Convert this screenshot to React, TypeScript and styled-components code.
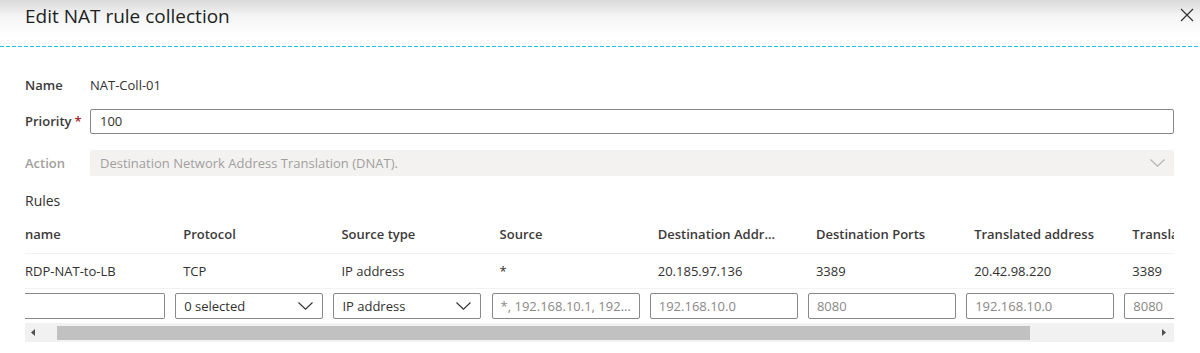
import styled, { createGlobalStyle } from "styled-components";

const GlobalStyle = createGlobalStyle`
  html, body {
    margin: 0;
    padding: 0;
    background: #ffffff;
  }
  body {
    font-family: "Open Sans", "Noto Sans", sans-serif;
    color: #323130;
  }
  * {
    box-sizing: border-box;
  }
`;

const Panel = styled.div`
  width: 1200px;
  height: 353px;
  overflow: hidden;
  background: #ffffff;
`;

const Header = styled.div`
  height: 47px;
  display: flex;
  align-items: flex-start;
  justify-content: space-between;
  padding: 3px 6px 0 25px;
  background: linear-gradient(#d9d9d9 0px, #f4f4f4 16px, #ffffff 38px);
  position: relative;

  &::after {
    content: "";
    position: absolute;
    left: 0;
    right: 2px;
    bottom: 0;
    height: 1px;
    background: repeating-linear-gradient(
      90deg,
      #1fc3ee 0px,
      #1fc3ee 4px,
      transparent 4px,
      transparent 6px
    );
  }
`;

const Title = styled.h1`
  margin: 0;
  font-size: 19px;
  font-weight: 400;
  line-height: 26px;
  color: #201f1e;
`;

const CloseButton = styled.button`
  border: none;
  background: none;
  padding: 0;
  margin-top: 5px;
  width: 14px;
  height: 14px;
  cursor: pointer;
  display: flex;
`;

const Body = styled.div`
  padding: 25px 26px 0 25px;
`;

const FieldRow = styled.div<{ $top?: number }>`
  display: flex;
  align-items: center;
  height: 26px;
  margin-top: ${(p) => p.$top ?? 0}px;
`;

const Label = styled.label<{ $disabled?: boolean }>`
  width: 65px;
  flex-shrink: 0;
  font-size: 13px;
  font-weight: 600;
  color: ${(p) => (p.$disabled ? "#a19f9d" : "#3b3a39")};
`;

const Required = styled.span`
  color: #a4262c;
  margin-left: 3px;
`;

const Value = styled.span`
  font-size: 13px;
`;

const TextBox = styled.div`
  flex: 1;
  height: 25px;
  border: 1px solid #8a8886;
  border-radius: 2px;
  display: flex;
  align-items: center;
  padding: 0 9px;
  font-size: 13px;
  color: #323130;
`;

const DisabledSelect = styled.div`
  flex: 1;
  height: 26px;
  background: #f3f2f1;
  border-radius: 2px;
  display: flex;
  align-items: center;
  justify-content: space-between;
  padding: 0 9px 0 10px;
  font-size: 13px;
  color: #a19f9d;
`;

const SectionTitle = styled.div`
  margin-top: 15px;
  height: 20px;
  line-height: 20px;
  font-size: 14px;
  color: #323130;
`;

const TableClip = styled.div`
  margin-top: 13px;
  overflow: hidden;
`;

const Table = styled.div`
  margin-left: -8px;
  width: 1330px;
`;

const Row = styled.div<{ $kind: "head" | "data" | "edit" }>`
  display: grid;
  grid-template-columns: repeat(8, 158.2px);
  align-items: ${(p) => (p.$kind === "head" ? "start" : "center")};
  height: ${(p) => (p.$kind === "head" ? 30 : p.$kind === "data" ? 35 : 34)}px;
  padding-top: ${(p) => (p.$kind === "edit" ? 4 : 0)}px;
  border-bottom: ${(p) => (p.$kind === "edit" ? "none" : "1px solid #f3f2f1")};
  align-content: ${(p) => (p.$kind === "edit" ? "start" : "normal")};
`;

const HeadCell = styled.div`
  padding-left: 8px;
  font-size: 13px;
  font-weight: 600;
  line-height: 20px;
  white-space: nowrap;
  color: #3b3a39;
`;

const DataCell = styled.div`
  padding-left: 8px;
  font-size: 13px;
  white-space: nowrap;
  color: #323130;
`;

const CellInput = styled.div<{ $placeholder?: boolean; $open?: boolean }>`
  width: 148px;
  height: 26px;
  border: 1px solid #8a8886;
  border-left-color: ${(p) => (p.$open ? "transparent" : "#8a8886")};
  border-radius: 2px;
  display: flex;
  align-items: center;
  justify-content: space-between;
  padding: 0 9px 0 8px;
  font-size: 13px;
  white-space: nowrap;
  overflow: hidden;
  color: ${(p) => (p.$placeholder ? "#8a8886" : "#323130")};
`;

const Scrollbar = styled.div`
  height: 19px;
  background: #f1f1f1;
  display: flex;
  align-items: center;
  padding-right: 2px;
`;

const ScrollArrow = styled.div`
  width: 16px;
  display: flex;
  justify-content: center;
`;

const Thumb = styled.div`
  margin-left: 16px;
  width: 973px;
  height: 14px;
  background: #c1c1c1;
`;

const Spacer = styled.div`
  flex: 1;
`;

function Chevron({ color = "#323130" }: { color?: string }) {
  return (
    <svg width="15" height="8" viewBox="0 0 15 8" fill="none">
      <path d="M0.5 0.5 L7.5 7.2 L14.5 0.5" stroke={color} strokeWidth="1.1" />
    </svg>
  );
}

function Triangle({ dir }: { dir: "left" | "right" }) {
  return (
    <svg width="4" height="7" viewBox="0 0 4 7">
      {dir === "left" ? (
        <path d="M4 0 L0 3.5 L4 7 Z" fill="#505050" />
      ) : (
        <path d="M0 0 L4 3.5 L0 7 Z" fill="#505050" />
      )}
    </svg>
  );
}

// the grid is scrolled: first and last columns show only part of their header
const headers = [
  "name",
  "Protocol",
  "Source type",
  "Source",
  "Destination Addr...",
  "Destination Ports",
  "Translated address",
  "Transla",
];

const rule = [
  "RDP-NAT-to-LB",
  "TCP",
  "IP address",
  "*",
  "20.185.97.136",
  "3389",
  "20.42.98.220",
  "3389",
];

export default function App() {
  return (
    <Panel>
      <GlobalStyle />
      <Header>
        <Title>Edit NAT rule collection</Title>
        <CloseButton aria-label="Close">
          <svg width="14" height="14" viewBox="0 0 14 14">
            <path
              d="M1 1 L13 13 M13 1 L1 13"
              stroke="#323130"
              strokeWidth="1.2"
            />
          </svg>
        </CloseButton>
      </Header>
      <Body>
        <FieldRow>
          <Label>Name</Label>
          <Value>NAT-Coll-01</Value>
        </FieldRow>
        <FieldRow $top={10}>
          <Label>
            Priority<Required>*</Required>
          </Label>
          <TextBox>100</TextBox>
        </FieldRow>
        <FieldRow $top={16}>
          <Label $disabled>Action</Label>
          <DisabledSelect>
            Destination Network Address Translation (DNAT).
            <Chevron color="#b3b0ad" />
          </DisabledSelect>
        </FieldRow>
        <SectionTitle>Rules</SectionTitle>
        <TableClip>
          <Table>
            <Row $kind="head">
              {headers.map((h) => (
                <HeadCell key={h}>{h}</HeadCell>
              ))}
            </Row>
            <Row $kind="data">
              {rule.map((v, i) => (
                <DataCell key={i}>{v}</DataCell>
              ))}
            </Row>
            <Row $kind="edit">
              <CellInput $open />
              <CellInput>
                0 selected
                <Chevron />
              </CellInput>
              <CellInput>
                IP address
                <Chevron />
              </CellInput>
              <CellInput $placeholder>*, 192.168.10.1, 192...</CellInput>
              <CellInput $placeholder>192.168.10.0</CellInput>
              <CellInput $placeholder>8080</CellInput>
              <CellInput $placeholder>192.168.10.0</CellInput>
              <CellInput $placeholder>8080</CellInput>
            </Row>
          </Table>
          <Scrollbar>
            <ScrollArrow>
              <Triangle dir="left" />
            </ScrollArrow>
            <Thumb />
            <Spacer />
            <ScrollArrow>
              <Triangle dir="right" />
            </ScrollArrow>
          </Scrollbar>
        </TableClip>
      </Body>
    </Panel>
  );
}
